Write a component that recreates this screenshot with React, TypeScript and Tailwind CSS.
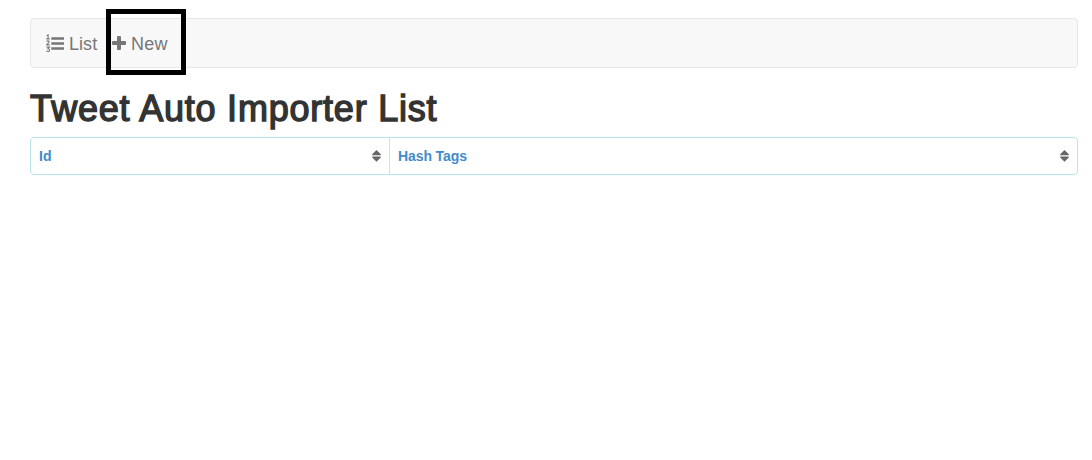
import React from "react";

function ListIcon() {
  return (
    <svg className="mt-px h-5 w-[18px] shrink-0" viewBox="0 0 18 20" fill="none" aria-hidden="true">
      <path d="M5.3 4.5h12.7M5.3 9.5h12.7M5.3 14.5h12.7" stroke="#777" strokeWidth="2.6" />
      <path
        d="M.8 1.8 2.1.9v4M.3 4.9h3.4M.6 7.5c.6-.9 2.6-.8 2.5.4C3 9 1 9.6.7 10.9h2.9M.6 13.1h2.8l-1.5 1.7c2.3-.1 2 2.8.2 2.7-.8 0-1.3-.2-1.8-.6"
        stroke="#777"
        strokeWidth="1.1"
      />
    </svg>
  );
}

function PlusIcon() {
  return (
    <svg className="size-[14px] shrink-0" viewBox="0 0 14 14" aria-hidden="true">
      <path
        d="M6 0h2a1 1 0 0 1 1 1v4h4a1 1 0 0 1 1 1v2a1 1 0 0 1-1 1H9v4a1 1 0 0 1-1 1H6a1 1 0 0 1-1-1V9H1a1 1 0 0 1-1-1V6a1 1 0 0 1 1-1h4V1a1 1 0 0 1 1-1z"
        fill="#777"
      />
    </svg>
  );
}

function SortIcon() {
  return (
    <svg className="h-3 w-[10px] shrink-0" viewBox="0 0 10 12" aria-hidden="true">
      <path d="M4.5 0 8.8 4.2Q9.1 5.2 8.3 5.2H.7Q-.1 5.2.2 4.2ZM4.5 11.8 8.8 7.6Q9.1 6.6 8.3 6.6H.7Q-.1 6.6.2 7.6Z" fill="#666" />
    </svg>
  );
}

export default function App() {
  return (
    <main className="h-[460px] bg-white pt-[18px] pr-[14px] pl-[30px] font-['Liberation_Sans',Arial,sans-serif]">
      <nav className="relative flex h-[50px] items-center rounded border border-[#e7e7e7] bg-[#f8f8f8] pl-[15px] text-lg text-[#777]">
        <a className="flex w-[66px] items-center gap-[5px]">
          <ListIcon />
          <span className="pt-0.5 tracking-[0.05px]">List</span>
        </a>
        <a className="flex items-center gap-[5px]">
          <PlusIcon />
          <span className="pt-0.5 tracking-[0.3px]">New</span>
        </a>
        <div className="absolute -top-[10px] left-[75px] h-[66px] w-20 border-[5px] border-black" />
      </nav>
      <h1 className="mt-[21px] h-10 text-4xl leading-10 tracking-[0.78px] whitespace-nowrap text-[#333] [-webkit-text-stroke:1.4px_#333]">
        <span className="tracking-[-0.8px]">T</span>weet Auto Importer List
      </h1>
      <div className="mt-2 grid h-[38px] grid-cols-[359px_1fr] rounded border border-[#b9e6ec] text-sm font-bold text-[#428bca]">
        <div className="flex items-center justify-between border-r border-[#ddd] pr-[7px] pl-2">
          <span>Id</span>
          <SortIcon />
        </div>
        <div className="flex items-center justify-between pr-[7px] pl-2">
          <span className="tracking-[-0.1px]">Hash Tags</span>
          <SortIcon />
        </div>
      </div>
    </main>
  );
}
